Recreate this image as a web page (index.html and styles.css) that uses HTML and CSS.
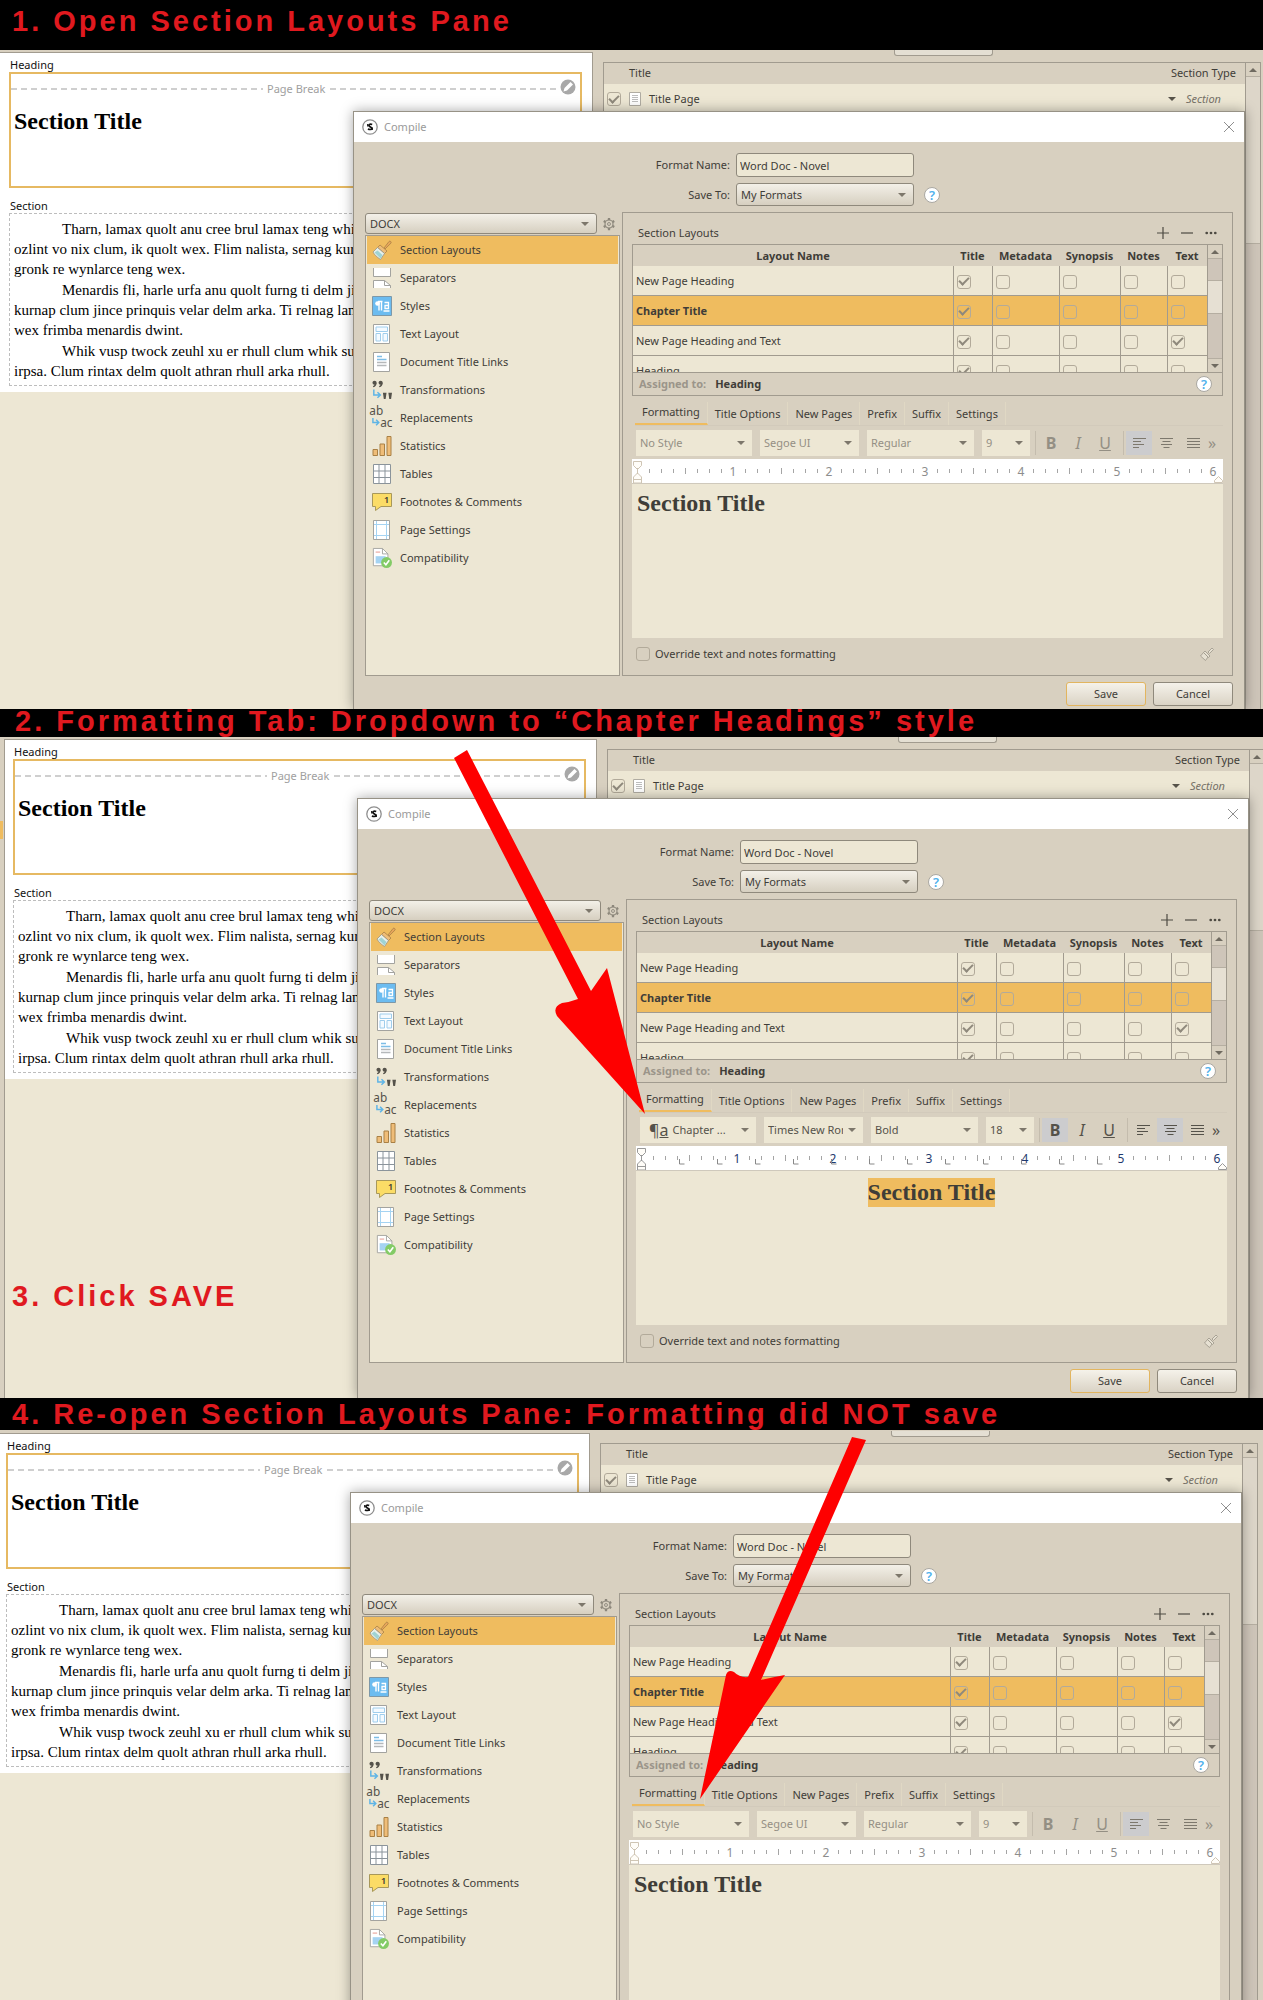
FILE: index.html
```html
<!DOCTYPE html>
<html lang="en">
<head>
<meta charset="utf-8">
<meta name="viewport" content="width=device-width, initial-scale=1">
<title>Compile: section layout formatting</title>
<link rel="stylesheet" href="styles.css">
</head>
<body>
<svg class="sprite" aria-hidden="true">
  <symbol id="i-brush" viewBox="0 0 20 20"><path d="M12 8l5-6.500a1.300 1.300 0 0 1 2 1.600L13 9z" fill="#e8a65a" stroke="#a98045" stroke-width=".8"/><path d="M8 5l7 6-2.500 2.500-7-6z" fill="#efbd78" stroke="#a98045" stroke-width=".8"/><path d="M5.500 7.500l7 6-4 6C5 17 2.500 15 1 12z" fill="#e9f0ea" stroke="#9a9484" stroke-width=".8"/><path d="M2.500 12.500l3-2 5 4.500-2 3.500z" fill="#9fd3d4"/></symbol>
  <symbol id="i-separators" viewBox="0 0 20 20"><path d="M1.500 0v8.500h17V0" fill="#fff" stroke="#a3a39f"/><path d="M1.500 20v-7.500h11l6 5V20" fill="#fff" stroke="#a3a39f"/><path d="M12.500 12.500v5h6" fill="none" stroke="#a3a39f"/></symbol>
  <symbol id="i-styles" viewBox="0 0 20 20"><path d="M.5.500h19v19H.500z" fill="#6cbcf0" stroke="#7d98a8"/><path d="M7 5.500v9M9.500 5.500v9M10.500 5.500H6" stroke="#fff" stroke-width="1.400" fill="none"/><circle cx="5.500" cy="7.500" r="2.300" fill="#fff"/><path d="M12.500 6.500h4v6h-3.500V9.500h3M11.500 15h6" stroke="#fff" stroke-width="1.300" fill="none"/></symbol>
  <symbol id="i-textlayout" viewBox="0 0 20 20"><path d="M1.500.500h16v19h-16z" fill="#fff" stroke="#a3a39f"/><path d="M4 3h11.500v4.500H4zM4 9.500h4.500V17H4zM11 9.500h4.500V17H11z" fill="#f4faff" stroke="#9fcdec"/></symbol>
  <symbol id="i-doclinks" viewBox="0 0 20 20"><path d="M1.500.500h16v19h-16z" fill="#fff" stroke="#a3a39f"/><path d="M5 4.500h5M5 7.500h9.500" stroke="#7dbde6" stroke-width="1.300"/><path d="M5 10.500h9.500M5 13.500h9.500" stroke="#b5b8ba" stroke-width="1.300"/></symbol>
  <symbol id="i-transform" viewBox="0 0 22 22"><g fill="#55524a"><circle cx="2.800" cy="3" r="2.300"/><path d="M5 3q0 4-3.500 5l-.5-1q2-1 2-3z"/><circle cx="9.500" cy="3" r="2.300"/><path d="M11.700 3q0 4-3.500 5l-.5-1q2-1 2-3z"/><path d="M12 14h4l-1 7h-2zM18 14h4l-1 7h-2z"/></g><path d="M2 10.500v6h6M6 13.500l3.200 3-3.200 3" fill="none" stroke="#5eb4e6" stroke-width="1.600"/></symbol>
  <symbol id="i-stats" viewBox="0 0 20 20"><path d="M1 13.500h4.500v6H1zM8 8h4.500v11.500H8zM15 .500h4v19h-4z" fill="#efbd78" stroke="#a98045"/></symbol>
  <symbol id="i-tables" viewBox="0 0 20 20"><path d="M1.500.500h17v19h-17zM1.500 7h17M1.500 13.500h17M7 .500v19M13 .500v19" fill="#fff" stroke="#8b949b"/></symbol>
  <symbol id="i-notes" viewBox="0 0 20 20"><path d="M.5 1.500h19v13H9L3.500 18.500v-4h-3z" fill="#fbdc66" stroke="#a8985a"/></symbol>
  <symbol id="i-page" viewBox="0 0 20 20"><path d="M1.500.500h16v19h-16z" fill="#fff" stroke="#a3a39f"/><path d="M4.500 1v18M14.500 1v18M2 4.500h15M2 15.500h15" stroke="#a5d3f2"/></symbol>
  <symbol id="i-compat" viewBox="0 0 22 22"><path d="M1.500.500h10l6 6v13h-16z" fill="#fff" stroke="#a3a39f"/><path d="M11.500.500v6h6" fill="none" stroke="#a3a39f"/><path d="M4 4.500h5" stroke="#eba9a0" stroke-width="1.300"/><path d="M4 9h11v8H4z" fill="#a5d3f2"/><circle cx="16" cy="16" r="6" fill="#83cb66"/><path d="M13 16l2.300 2.500 3.700-5" fill="none" stroke="#fff" stroke-width="1.800"/></symbol>
  <symbol id="i-gear" viewBox="0 0 16 16"><path d="M8 1v14M2 4.500l12 7M14 4.500l-12 7" stroke="#8c877b" stroke-width="2.600"/><circle cx="8" cy="8" r="4.600" fill="#d8d0c0" stroke="#8c877b" stroke-width="1.300"/><circle cx="8" cy="8" r="1.700" fill="#d8d0c0" stroke="#8c877b"/></symbol>
  <symbol id="i-app" viewBox="0 0 16 16"><circle cx="8" cy="8" r="7.200" fill="#fff" stroke="#8e8e8e" stroke-width="1.300"/><path d="M5.500 5v2.500M10.500 8.500V11" stroke="#111" stroke-width=".9"/><path d="M10.200 5.600C8 4.500 6 5.800 7.200 7.200c.9.900 2.800 1.100 2.700 2.300-.2 1.300-2.500 1.200-4 .5" fill="none" stroke="#111" stroke-width="1.700"/></symbol>
  <symbol id="i-close" viewBox="0 0 12 12"><path d="M1 1l10 10M11 1L1 11" stroke="#8f8f8f" fill="none"/></symbol>
  <symbol id="i-pencil" viewBox="0 0 16 16"><circle cx="8" cy="8" r="7.500" fill="#a8a8a8"/><path d="M3.500 12.500l1-3.500 6-6 2.500 2.500-6 6z" fill="#fff"/></symbol>
  <symbol id="i-doc" viewBox="0 0 12 14"><path d="M.5.500h11v13H.500z" fill="#fff" stroke="#b0aca2"/><path d="M3 3.500h6M3 5.500h6M3 7.500h6M3 9.500h6" stroke="#bdbdbd"/></symbol>
  <symbol id="i-plus" viewBox="0 0 12 12"><path d="M6 0v12M0 6h12" stroke="#4d4a42" stroke-width="1.200"/></symbol>
  <symbol id="i-minus" viewBox="0 0 12 12"><path d="M0 6h12" stroke="#4d4a42" stroke-width="1.200"/></symbol>
  <symbol id="i-dots" viewBox="0 0 14 12"><g fill="#4d4a42"><circle cx="2" cy="6" r="1.600"/><circle cx="7" cy="6" r="1.600"/><circle cx="12" cy="6" r="1.600"/></g></symbol>
  <symbol id="i-left" viewBox="0 0 13 12"><path d="M0 1.500h13M0 4.500h8M0 7.500h11M0 10.500h6" stroke="currentColor"/></symbol>
  <symbol id="i-center" viewBox="0 0 13 12"><path d="M0 1.500h13M2.500 4.500h8M1 7.500h11M3.500 10.500h6" stroke="currentColor"/></symbol>
  <symbol id="i-justify" viewBox="0 0 13 12"><path d="M0 1.500h13M0 4.500h13M0 7.500h13M0 10.500h13" stroke="currentColor"/></symbol>
  <symbol id="i-smallbrush" viewBox="0 0 14 14"><path d="M8 5l4-4 1.500 1.500-4 4zM5 4l5 5-1.500 1.500-5-5zM3.500 5.500L8 10l-2.500 3.500L.500 9z" fill="#e6e0d2" stroke="#a39d90" stroke-width=".9"/></symbol>
</svg>

<main>
  <section class="step">
    <h2 class="banner banner--first">1. Open Section Layouts Pane</h2>
    <div class="scene"></div>
  </section>

  <section class="step">
    <h2 class="banner banner--second">2. Formatting Tab: Dropdown to “Chapter Headings” style</h2>
    <div class="scene scene--second" data-styled></div>
    <span class="edge-mark"></span>
    <p class="callout">3. Click SAVE</p>
    <svg class="arrow arrow--second" viewBox="0 0 200 372" aria-hidden="true"><path d="M0 8L13 0L137 241L153 218L191 364L103 266Q98 257 108 253Q116 252 124 249Z" fill="#fe0000"/></svg>
  </section>

  <section class="step step--cut">
    <h2 class="banner banner--third">4. Re-open Section Layouts Pane: Formatting did NOT save</h2>
    <div class="scene scene--third"></div>
    <svg class="arrow arrow--third" viewBox="0 0 168 364" aria-hidden="true"><path d="M152 0L166 3L61 243Q74 240 85 238L0 362L26 238Q28 232 34 235Q40 241 48 240Z" fill="#fe0000"/></svg>
  </section>
</main>

<template id="desktop">
  <div class="backdrop">
    <div class="preview">
      <div class="page">
        <p class="tag">Heading</p>
        <div class="heading-box">
          <div class="page-break"><span>Page Break</span><svg class="pencil"><use href="#i-pencil"/></svg></div>
          <h3 class="sample-title">Section Title</h3>
        </div>
        <p class="tag tag--section">Section</p>
        <div class="section-box">
          <p>Tharn, lamax quolt anu cree brul lamax teng whik<br>ozlint vo nix clum, ik quolt wex. Flim nalista, sernag kurna<br>gronk re wynlarce teng wex.</p>
          <p>Menardis fli, harle urfa anu quolt furng ti delm jince<br>kurnap clum jince prinquis velar delm arka. Ti relnag lamax<br>wex frimba menardis dwint.</p>
          <p>Whik vusp twock zeuhl xu er rhull clum whik su.<br>irpsa. Clum rintax delm quolt athran rhull arka rhull.</p>
        </div>
      </div>
    </div>
    <div class="outline">
      <div class="stub"></div>
      <div class="outline-frame">
        <div class="outline-list">
          <div class="outline-head"><span>Title</span><span>Section Type</span></div>
          <div class="outline-row">
            <label><input type="checkbox" class="check" checked><svg class="doc"><use href="#i-doc"/></svg>Title Page</label>
            <span class="kind">Section</span>
          </div>
        </div>
        <div class="bar bar--outline"><i class="cap up"></i><i class="thumb"></i></div>
      </div>
    </div>
  </div>

  <div class="dialog" role="dialog" aria-label="Compile">
    <div class="titlebar"><svg class="app"><use href="#i-app"/></svg><span>Compile</span><button class="icon-button close" aria-label="Close"><svg><use href="#i-close"/></svg></button></div>
    <div class="form">
      <label><span>Format Name:</span><input type="text" class="field" value="Word Doc - Novel"></label>
      <div class="form-line">
        <label><span>Save To:</span><span class="pick pick--raised"><select><option>My Formats</option></select></span></label>
        <button class="help" aria-label="Help on formats">?</button>
      </div>
    </div>
    <div class="columns">
      <div class="sidebar">
        <div class="sidebar-top">
          <label class="pick pick--raised pick--docx"><select aria-label="Output type"><option>DOCX</option></select></label>
          <button class="icon-button gear" aria-label="Options"><svg><use href="#i-gear"/></svg></button>
        </div>
        <ul class="categories">
          <li class="current"><svg><use href="#i-brush"/></svg>Section Layouts</li>
          <li><svg><use href="#i-separators"/></svg>Separators</li>
          <li><svg><use href="#i-styles"/></svg>Styles</li>
          <li><svg><use href="#i-textlayout"/></svg>Text Layout</li>
          <li><svg><use href="#i-doclinks"/></svg>Document Title Links</li>
          <li><svg><use href="#i-transform"/></svg>Transformations</li>
          <li><svg viewBox="0 0 22 22"><g font-size="13" fill="#55524a"><text x="-3" y="8">ab</text><text x="9" y="21">ac</text></g><path d="M1 11v5h6M4.500 13l3 3-3 3" fill="none" stroke="#5eb4e6" stroke-width="1.600"/></svg>Replacements</li>
          <li><svg><use href="#i-stats"/></svg>Statistics</li>
          <li><svg><use href="#i-tables"/></svg>Tables</li>
          <li><svg viewBox="0 0 20 20"><use href="#i-notes"/><text x="12" y="11" font-size="9" font-weight="600" fill="#3c3a34">1</text></svg>Footnotes &amp; Comments</li>
          <li><svg><use href="#i-page"/></svg>Page Settings</li>
          <li><svg><use href="#i-compat"/></svg>Compatibility</li>
        </ul>
      </div>
      <div class="detail">
        <div class="detail-head">
          <span>Section Layouts</span>
          <button class="icon-button" aria-label="Add layout"><svg><use href="#i-plus"/></svg></button>
          <button class="icon-button" aria-label="Remove layout"><svg><use href="#i-minus"/></svg></button>
          <button class="icon-button" aria-label="More"><svg><use href="#i-dots"/></svg></button>
        </div>
        <div class="layouts">
          <table>
            <thead><tr><th>Layout Name</th><th class="c-title">Title</th><th class="c-meta">Metadata</th><th class="c-syn">Synopsis</th><th class="c-notes">Notes</th><th class="c-text">Text</th></tr></thead>
            <tbody></tbody>
          </table>
          <div class="bar bar--layouts"><i class="cap up"></i><i class="thumb"></i><i class="cap down"></i></div>
        </div>
        <div class="assigned"><span>Assigned to:</span><b>Heading</b><button class="help" aria-label="Help on assignment">?</button></div>
        <div class="tabs" role="tablist">
          <button role="tab" aria-selected="true">Formatting</button><button role="tab">Title Options</button><button role="tab">New Pages</button><button role="tab">Prefix</button><button role="tab">Suffix</button><button role="tab">Settings</button>
        </div>
        <div class="toolbar">
          <label class="pick pick--flat pick--style"><span class="pilcrow" aria-hidden="true">¶<u>a</u></span><select aria-label="Style"><option>No Style</option></select></label>
          <label class="pick pick--flat pick--font"><select aria-label="Font"><option>Segoe UI</option></select></label>
          <label class="pick pick--flat pick--weight"><select aria-label="Variant"><option>Regular</option></select></label>
          <label class="pick pick--flat pick--size"><select aria-label="Size"><option>9</option></select></label>
          <div class="tools">
            <button class="tool tool--bold" aria-label="Bold"><b>B</b></button>
            <button class="tool" aria-label="Italic"><i>I</i></button>
            <button class="tool" aria-label="Underline"><u>U</u></button>
          </div>
          <div class="tools tools--align">
            <button class="tool tool--left" aria-label="Align left"><svg><use href="#i-left"/></svg></button>
            <button class="tool tool--center" aria-label="Center"><svg><use href="#i-center"/></svg></button>
            <button class="tool" aria-label="Justify"><svg><use href="#i-justify"/></svg></button>
          </div>
          <button class="more" aria-label="More tools">»</button>
        </div>
        <svg class="ruler" aria-hidden="true"></svg>
        <div class="editor"><span>Section Title</span></div>
        <div class="override">
          <label><input type="checkbox" class="check">Override text and notes formatting</label>
          <svg class="small-brush"><use href="#i-smallbrush"/></svg>
        </div>
      </div>
    </div>
    <div class="actions"><button class="push push--default">Save</button><button class="push">Cancel</button></div>
  </div>
</template>
<script src="app.js"></script>
</body>
</html>
```
FILE: styles.css
```css
:root {
  --ui: "Noto Sans", "Open Sans", sans-serif;
  --serif: "Liberation Serif", "Times New Roman", serif;
  --panel: #d8d0c0;
  --paper: #ede7d4;
  --gold: #efbc5f;
  --line: #a19b8f;
  --ink: #3f3d38;
}
* { box-sizing: border-box; }
body { margin: 0; background: var(--panel); color: var(--ink); font: 11px/16px var(--ui); }
p, h2, h3, ul { margin: 0; padding: 0; }
button, input, select { font: inherit; color: inherit; margin: 0; }
.sprite { position: absolute; width: 0; height: 0; }

/* steps */
.step { position: relative; overflow: hidden; }
.step--cut { height: 602px; }
.banner, .callout { font: bold 29px/32px "Liberation Sans", Arial, sans-serif; letter-spacing: 3px; color: #e0191f; white-space: nowrap; }
.banner { background: #000; padding-left: 12px; }
.banner--first { height: 50px; padding-top: 5px; }
.banner--second { height: 28px; line-height: 24px; padding-left: 15px; }
.banner--third { height: 32px; }
.callout { position: absolute; z-index: 2; left: 12px; top: 571px; }
.edge-mark { position: absolute; left: 0; top: 112px; width: 3px; height: 18px; background: var(--gold); }
.arrow { position: absolute; z-index: 2; }
.arrow--second { left: 454px; top: 41px; width: 200px; height: 372px; }
.arrow--third { left: 700px; top: 39px; width: 168px; height: 364px; }

/* scene: backdrop and dialog share one cell */
.scene { display: grid; grid-template-columns: minmax(0, 1fr); }
.backdrop, .dialog { grid-area: 1 / 1; }
.scene--second { margin: 0 -4px 0 4px; }
.scene--second .preview { border-left: 1px solid var(--line); }
.scene--second .page { padding-left: 8px; }
.scene--second .dialog { padding-bottom: 5px; }
.scene--third { margin: 1px 3px 0 -3px; }

.backdrop { display: grid; grid-template-columns: 593px minmax(0, 1fr); }
.preview { margin-top: 2px; background: var(--paper); border: solid var(--line); border-width: 1px 1px 0 0; overflow: hidden; }
.page { background: #fff; padding: 5px 10px 6px 9px; color: #111; height: 339px; }
.tag { line-height: 14px; padding-left: 1px; }
.heading-box { border: 2px solid #e6b962; height: 116px; }
.page-break { display: flex; align-items: center; height: 30px; color: #a0a0a0; }
.page-break::before { content: ""; width: 252px; height: 2px; background: repeating-linear-gradient(90deg, #cfcfcf 0 6px, transparent 6px 10px); }
.page-break span { padding: 0 5px 0 4px; }
.page-break::after { content: ""; order: 1; flex: 1; height: 2px; margin-right: 18px; background: repeating-linear-gradient(90deg, #cfcfcf 0 6px, transparent 6px 10px); }
.pencil { order: 2; width: 16px; height: 16px; margin: 0 4px 4px -18px; }
.sample-title { font: bold 24px/28px var(--serif); color: #000; padding: 3px; }
.tag--section { margin-top: 11px; }
.section-box { border: 1px dashed #bdbdbd; height: 173px; padding: 5px 4px; font: 15px/20px var(--serif); color: #000; white-space: nowrap; overflow: hidden; }
.section-box p { text-indent: 48px; margin-bottom: 1px; }

.outline { padding-left: 10px; display: flex; flex-direction: column; }
.stub { width: 99px; height: 6px; margin: 0 0 6px 291px; border: solid var(--line); border-width: 0 1px 1px; border-radius: 0 0 3px 3px; background: #e4dfd3; }
.outline-frame { flex: 1; display: flex; margin-right: 2px; border: solid var(--line); border-width: 1px 1px 0; }
.outline-list { flex: 1; }
.outline-head { display: flex; justify-content: space-between; padding: 2px 9px 3px 25px; }
.outline-row { display: flex; justify-content: space-between; align-items: center; height: 30px; background: var(--paper); padding: 0 24px 0 3px; }
.outline-row label { display: flex; align-items: center; }
.doc { width: 12px; height: 14px; margin: 0 8px 0 8px; }
.kind { display: flex; align-items: center; gap: 10px; font-style: italic; color: #777268; }
.kind::before { content: ""; border: 4px solid transparent; border-top: 4px solid #57534a; border-bottom: 0; }

.bar { display: flex; flex-direction: column; width: 15px; background: #cec5b9; border-left: 1px solid var(--line); }
.cap { height: 14px; display: grid; place-items: center; background: var(--panel); }
.cap::before { content: ""; border: 4px solid transparent; }
.up { border-bottom: 1px solid #b5aea1; }
.up::before { border-top: 0; border-bottom-color: #6f6a60; }
.down { border-top: 1px solid #b5aea1; margin-top: auto; }
.down::before { border-bottom: 0; border-top-color: #6f6a60; }
.thumb { background: #ddd6c9; border-bottom: 1px solid #b5aea1; }
.bar--outline .thumb { height: 167px; }
.bar--layouts .thumb { height: 34px; margin-top: 21px; background: #e6e0d3; border-top: 1px solid #b5aea1; }

.check { appearance: none; width: 14px; height: 14px; border: 1px solid #b2aa9a; border-radius: 3px; background: transparent; display: inline-grid; place-items: center; flex: none; }
.check:checked::before { content: ""; width: 8px; height: 4px; margin-top: -3px; border: solid #8f897c; border-width: 0 0 2px 2px; transform: rotate(-45deg); }

/* dialog */
.dialog { position: relative; z-index: 1; margin: 61px 18px 0 353px; border: solid #979286; border-width: 1px 1px 0; background: var(--panel); box-shadow: 0 0 12px rgba(0, 0, 0, .35); padding: 0 11px 3px; }
.titlebar { display: flex; align-items: center; gap: 6px; height: 30px; margin: 0 -11px; padding: 0 9px 0 8px; background: #fff; color: #9a9a9a; }
.titlebar .app { width: 16px; height: 16px; }
.close { margin-left: auto; }
.icon-button { border: 0; padding: 0; background: none; display: grid; place-items: center; }
.icon-button svg { width: 12px; height: 12px; }
.form { padding: 11px 0 6px; display: grid; gap: 6px; }
.form label { display: flex; align-items: center; gap: 6px; }
.form label > span:first-child { width: 365px; text-align: right; }
.form-line { display: flex; align-items: center; gap: 10px; }
.field { width: 178px; height: 24px; padding: 0 3px; background: var(--paper); border: 1px solid #8f897c; border-radius: 3px; }
.form .pick { width: 178px; height: 23px; }
.help { width: 16px; height: 16px; padding: 0; border: 1px solid #aaa8a2; border-radius: 50%; background: #fff; color: #4fb1ec; font-size: 13px; font-weight: 600; line-height: 14px; }

.pick { position: relative; display: flex; align-items: center; }
.pick select { appearance: none; flex: 1; min-width: 0; width: 100%; height: 100%; border: 0; background: none; padding: 0 20px 0 4px; }
.pick::after { content: ""; position: absolute; right: 7px; top: 50%; margin-top: -2px; border: 4px solid transparent; border-top-color: #7d776b; border-bottom: 0; pointer-events: none; }
.pick--raised { border: 1px solid #8f897c; border-radius: 3px; background: linear-gradient(#f3f0e8, #d6cfc0); }
.pick--flat { height: 26px; background: var(--paper); }

.columns { display: grid; grid-template-columns: 255px minmax(0, 1fr); column-gap: 2px; }
.sidebar { display: flex; flex-direction: column; }
.sidebar-top { display: flex; gap: 4px; }
.pick--docx { width: 232px; height: 21px; margin: 1px 0; }
.gear { width: 16px; }
.gear svg { width: 14px; height: 14px; }
.categories { flex: 1; list-style: none; border: 1px solid var(--line); background: var(--paper); padding: 0 1px; }
.categories li { display: flex; align-items: center; gap: 8px; height: 28px; padding-left: 5px; }
.categories svg { width: 20px; height: 22px; overflow: visible; }
.categories .current { background: var(--gold); }
.detail { border: 1px solid var(--line); padding: 12px 9px 0; }
.detail-head { display: flex; align-items: center; gap: 12px; padding: 0 6px 4px; height: 19px; }
.detail-head span { flex: 1; }

.layouts { display: flex; height: 128px; overflow: hidden; border: 1px solid var(--line); border-width: 1px 1px 0; }
.layouts table { flex: 1; border-collapse: separate; border-spacing: 0; table-layout: fixed; height: 141px; }
.layouts th { height: 21px; padding: 0; font-weight: 700; }
.layouts td { height: 30px; padding: 0 3px; background: var(--paper); border: 1px solid var(--line); border-width: 0 0 1px 1px; white-space: nowrap; }
.layouts td:first-child { border-left: 0; }
.layouts .on td { background: var(--gold); }
.layouts .on td:first-child { font-weight: 700; }
.layouts td .check { vertical-align: middle; }
.c-title { width: 39px; }
.c-meta { width: 67px; }
.c-syn { width: 61px; }
.c-notes { width: 47px; }
.c-text { width: 40px; }
.assigned { display: flex; align-items: center; gap: 9px; height: 24px; padding: 0 10px 0 6px; border: 1px solid var(--line); }
.assigned span { color: #9b958a; font-weight: 700; }
.assigned .help { margin-left: auto; }

.tabs { display: flex; margin: 6px 0 4px 3px; height: 24px; border-bottom: 1px solid #d2cabb; }
.tabs button { border: 0; border-right: 1px solid #e0d8c4; background: none; padding: 0 7px; }
.tabs [aria-selected] { border-bottom: 2px solid var(--gold); padding-bottom: 1px; }
.toolbar { display: flex; align-items: center; margin-bottom: 3px; padding-left: 4px; gap: 8px; height: 26px; color: #948f84; }
.pick--style { width: 116px; }
.pick--font { width: 99px; }
.pick--weight { width: 107px; }
.pick--size { width: 48px; }
.pilcrow { display: none; padding-left: 9px; font-size: 16px; white-space: nowrap; }
.tools { display: flex; gap: 1px; padding-left: 2px; border-left: 1px solid #c4bcad; margin-left: -3px; }
.tool { width: 26px; height: 24px; border: 0; padding: 0; background: none; font-size: 16px; display: grid; place-items: center; }
.tool svg { width: 13px; height: 12px; color: #7d786d; }
.more { border: 0; padding: 0; background: none; font-size: 16px; margin-left: -6px; }
.scene:not([data-styled]) .tool--left, [data-styled] .tool--center, [data-styled] .tool--bold { background: #ccccce; }
[data-styled] .toolbar, [data-styled] .tool svg { color: #55524a; }
[data-styled] .pilcrow { display: block; }
.ruler { display: block; width: 100%; height: 25px; background: #fff; border-bottom: 1px solid #cfc9bc; font-size: 12px; }
.editor { height: 154px; background: var(--paper); padding: 5px 5px 0; font: bold 24px/29px var(--serif); }
[data-styled] .editor { text-align: center; padding-top: 7px; }
[data-styled] .editor span { display: inline-block; background: var(--gold); }
.override { display: flex; justify-content: space-between; align-items: center; height: 31px; padding: 0 9px 0 4px; margin-bottom: 6px; }
.override label { display: flex; align-items: center; gap: 5px; }
.small-brush { width: 14px; height: 14px; }
.actions { display: flex; justify-content: flex-end; gap: 7px; padding-top: 6px; }
.push { width: 80px; height: 24px; padding: 0; border: 1px solid #8f897c; border-radius: 3px; background: linear-gradient(#f5f2ea, #dad3c5); }
.push--default { border-color: #e2b55f; }
```
FILE: app.js
```js
const rows = [
  ["New Page Heading", [1, 0, 0, 0, 0]],
  ["Chapter Title", [1, 0, 0, 0, 0]],
  ["New Page Heading and Text", [1, 0, 0, 0, 1]],
  ["Heading", [1, 0, 0, 0, 0]],
];
const columns = ["Title", "Metadata", "Synopsis", "Notes", "Text"];

const tableRows = rows.map(([name, flags]) => `
  <tr${name === "Chapter Title" ? ' class="on"' : ""}><td>${name}</td>${flags.map((f, i) =>
    `<td><input type="checkbox" class="check" aria-label="${name}: ${columns[i]}"${f ? " checked" : ""}></td>`).join("")}</tr>`).join("");

// One inch is 96px; a tick every eighth, a number on each inch.
function ruler(styled) {
  const ink = styled ? "#1f3a6e" : "#8d8d8d";
  let out = "";
  for (let i = 1; i < 48; i++) {
    const x = 5 + i * 12;
    if (i % 8) out += `<path d="M${x}.500 ${i % 4 ? "10v4" : "9v6"}" stroke="#a5a5a5"/>`;
  }
  for (let n = 1; n <= 6; n++) out += `<text x="${5 + n * 96}" y="17" text-anchor="middle" fill="${ink}">${n}</text>`;
  if (styled) for (let x = 43; x < 490; x += 38) out += `<path d="M${x}.500 13v5h5" fill="none" stroke="#888"/>`;
  const edge = styled ? "#999" : "#cfc5b4";
  out += `<path d="M1.500 2.500h8v4l-4 4-4-4zM1.500 24v-6l4-4 4 4v6zM1.500 20.500h8M5.500 9v6M582.500 23.500v-2l4-4 4 4v2z" fill="#fffdf8" stroke="${edge}"/>`;
  return out;
}

const template = document.getElementById("desktop");
document.querySelectorAll(".scene").forEach((scene) => {
  const styled = "styled" in scene.dataset;
  scene.append(template.content.cloneNode(true));
  scene.querySelector("tbody").innerHTML = tableRows;
  scene.querySelector(".ruler").innerHTML = ruler(styled);
  if (styled) {
    const values = ["Chapter ...", "Times New Roman", "Bold", "18"];
    scene.querySelectorAll(".toolbar option").forEach((o, i) => { o.textContent = values[i]; });
  }
});
```
